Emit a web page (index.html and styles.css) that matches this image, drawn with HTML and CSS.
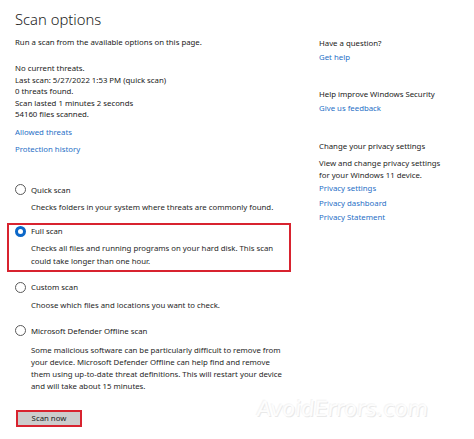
FILE: index.html
```html
<!DOCTYPE html>
<html lang="en">
<head>
<meta charset="utf-8">
<title>Scan options</title>
<link rel="stylesheet" href="styles.css">
</head>
<body>
<div class="page">
  <main class="left">
    <h1 class="title">Scan options</h1>
    <p class="intro">Run a scan from the available options on this page.</p>
    <div class="status">
      <div>No current threats.</div>
      <div>Last scan: 5/27/2022 1:53 PM (quick scan)</div>
      <div>0 threats found.</div>
      <div>Scan lasted 1 minutes 2 seconds</div>
      <div>54160 files scanned.</div>
    </div>
    <a class="link link-allowed">Allowed threats</a>
    <a class="link link-history">Protection history</a>

    <div class="options">
      <div class="option opt-quick">
        <div class="opt-row"><span class="radio"></span><span class="opt-label">Quick scan</span></div>
        <p class="opt-desc">Checks folders in your system where threats are commonly found.</p>
      </div>
      <div class="option opt-full selected">
        <div class="opt-row"><span class="radio checked"></span><span class="opt-label">Full scan</span></div>
        <p class="opt-desc">Checks all files and running programs on your hard disk. This scan<br>could take longer than one hour.</p>
      </div>
      <div class="option opt-custom">
        <div class="opt-row"><span class="radio"></span><span class="opt-label">Custom scan</span></div>
        <p class="opt-desc">Choose which files and locations you want to check.</p>
      </div>
      <div class="option opt-offline">
        <div class="opt-row"><span class="radio"></span><span class="opt-label">Microsoft Defender Offline scan</span></div>
        <p class="opt-desc desc-long">Some malicious software can be particularly difficult to remove from<br>your device. Microsoft Defender Offline can help find and remove<br>them using up-to-date threat definitions. This will restart your device<br>and will take about 15 minutes.</p>
      </div>
    </div>
    <button class="scan-btn">Scan now</button>
  </main>

  <aside class="right">
    <section class="side-sec sec-help">
      <div class="side-head">Have a question?</div>
      <a class="side-link">Get help</a>
    </section>
    <section class="side-sec sec-improve">
      <div class="side-head">Help improve Windows Security</div>
      <a class="side-link">Give us feedback</a>
    </section>
    <section class="side-sec sec-privacy">
      <div class="side-head">Change your privacy settings</div>
      <p class="side-text">View and change privacy settings<br>for your Windows 11 device.</p>
      <a class="side-link pl">Privacy settings</a>
      <a class="side-link pl">Privacy dashboard</a>
      <a class="side-link pl">Privacy Statement</a>
    </section>
  </aside>
</div>
<div class="watermark">AvoidErrors.com</div>
</body>
</html>
```
FILE: styles.css
```css
html, body {
  margin: 0;
  padding: 0;
  background: #ffffff;
}
body {
  font-family: "Noto Sans", "Open Sans", sans-serif;
  font-size: 7.8px;
  color: #1a1a1a;
  width: 474px;
  height: 439px;
  overflow: hidden;
  position: relative;
}
.page {
  display: flex;
  padding-left: 15px;
}
.left {
  width: 304px;
  flex: none;
  display: flex;
  flex-direction: column;
  align-items: flex-start;
}
.title {
  margin: 7px 0 0 0;
  font-size: 14.8px;
  line-height: 24px;
  font-weight: 300;
  color: #1b1b1b;
}
.intro {
  margin: 5px 0 0 0;
  line-height: 12px;
}
.status {
  margin-top: 15px;
  line-height: 11.5px;
}
.link {
  display: block;
  color: #1f6fc6;
  line-height: 12px;
}
.link-allowed { margin-top: 5px; }
.link-history { margin-top: 5px; }

.options {
  margin-top: 27px;
  margin-left: -8px;
  display: flex;
  flex-direction: column;
}
.option {
  width: 274px;
  border: 2px solid transparent;
  padding: 0 0 0 6px;
}
.option.selected {
  border-color: #d8232f;
  padding-bottom: 3px;
}
.opt-quick { margin-top: 0; }
.opt-full { margin-top: 8px; }
.opt-custom { margin-top: 7px; }
.opt-offline { margin-top: 9px; }
.opt-row {
  display: flex;
  align-items: center;
  height: 12px;
  line-height: 12px;
}
.radio {
  box-sizing: border-box;
  width: 11px;
  height: 11px;
  border-radius: 50%;
  border: 1px solid #5a5a5a;
  background: #fff;
  flex: none;
}
.radio.checked {
  border: 3px solid #0b67c8;
}
.opt-label {
  margin-left: 5px;
  color: #1a1a1a;
}
.opt-desc {
  margin: 5px 0 0 16px;
  line-height: 12.5px;
  color: #262626;
  white-space: nowrap;
}
.opt-custom .opt-desc { margin-top: 6px; }
.desc-long {
  margin-top: 7px;
  line-height: 12px;
}
.scan-btn {
  margin-top: 16px;
  margin-left: 1px;
  width: 66px;
  height: 17px;
  padding: 0;
  background: #cccccc;
  border: 2px solid #d8232f;
  font-family: inherit;
  font-size: 7.8px;
  color: #1a1a1a;
  line-height: 13px;
}

.right {
  padding-top: 36px;
  display: flex;
  flex-direction: column;
}
.side-sec {
  display: flex;
  flex-direction: column;
}
.sec-improve { margin-top: 23px; }
.sec-privacy { margin-top: 24px; }
.side-head {
  line-height: 14px;
  color: #1a1a1a;
}
.side-link {
  color: #1f6fc6;
  line-height: 14px;
}
.side-link.pl {
  line-height: 14.5px;
}
.side-text {
  margin: 5px 0 0 0;
  line-height: 11.5px;
  color: #262626;
}

.watermark {
  position: absolute;
  left: 257px;
  top: 396px;
  font-family: "DejaVu Sans", sans-serif;
  font-size: 21px;
  line-height: 26px;
  color: #fdfdfd;
  text-shadow: 1px 1px 0 #e9e9e9, -1px -1px 0 #f5f5f5;
  pointer-events: none;
  transform: skewX(-6deg);
}
```
